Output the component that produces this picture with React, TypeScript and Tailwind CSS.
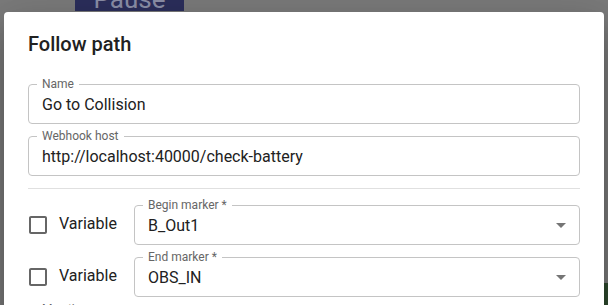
import React from 'react';

const OutlinedField: React.FC<{ label: string; value: string; select?: boolean }> = ({ label, value, select }) => (
    <div className={`relative flex h-10 items-center rounded border border-[#c4c4c4] pl-[13px] ${select ? 'pr-[6px]' : 'pr-[13px]'}`}>
        <span className="absolute -top-[9px] left-[8px] bg-white px-[5px] text-xs leading-4 text-[#666666]">{label}</span>
        <span className="mt-[2px] flex-1 truncate text-base text-[#212121]">{value}</span>
        {select && (
            <svg viewBox="0 0 24 24" className="h-6 w-6 fill-[#757575]">
                <path d="M7 10l5 5 5-5z" />
            </svg>
        )}
    </div>
);

const VariableCheck: React.FC = () => (
    <div className="flex w-[106px] shrink-0 items-center">
        <svg viewBox="0 0 24 24" className="-ml-[2px] -mt-[1px] h-6 w-6 fill-[#666666]">
            <path d="M19 5v14H5V5h14m0-2H5c-1.1 0-2 .9-2 2v14c0 1.1.9 2 2 2h14c1.1 0 2-.9 2-2V5c0-1.1-.9-2-2-2z" />
        </svg>
        <span className="-mt-[2px] ml-[9px] text-base text-[#212121]">Variable</span>
    </div>
);

export default function App() {
    return (
        <div className="relative h-[305px] w-[608px] overflow-hidden bg-[#7b7b7b] font-[Roboto,sans-serif]">
            {/* page behind the backdrop */}
            <div className="absolute left-[75px] top-[-14px] flex h-[25px] w-[109px] items-start justify-center bg-[#2c2f5c] text-[26px] leading-[26px] text-[#8c90a8]">
                Pause
            </div>
            <div className="absolute bottom-0 right-0 h-[22px] w-[6px] bg-[#2f4a2f]" />

            {/* dialog */}
            <div className="absolute left-[4px] top-[12px] w-[600px] rounded bg-white shadow-[0_11px_15px_-7px_rgba(0,0,0,0.2),0_24px_38px_3px_rgba(0,0,0,0.14),0_9px_46px_8px_rgba(0,0,0,0.12)]">
                <h2 className="px-6 py-4 text-[20px] font-medium leading-8 text-[#212121]">Follow path</h2>
                <div className="flex flex-col px-6 pt-2 pb-6">
                    <OutlinedField label="Name" value="Go to Collision" />
                    <div className="mt-3">
                        <OutlinedField label="Webhook host" value="http://localhost:40000/check-battery" />
                    </div>
                    <div className="mt-3 mb-4 h-px bg-[#e0e0e0]" />
                    <div className="flex items-center">
                        <VariableCheck />
                        <div className="flex-1">
                            <OutlinedField label="Begin marker *" value="B_Out1" select />
                        </div>
                    </div>
                    <div className="mt-3 flex items-center">
                        <VariableCheck />
                        <div className="flex-1">
                            <OutlinedField label="End marker *" value="OBS_IN" select />
                        </div>
                    </div>
                    <div className="mt-3">
                        <OutlinedField label="Max time" value="" />
                    </div>
                </div>
            </div>
        </div>
    );
}
